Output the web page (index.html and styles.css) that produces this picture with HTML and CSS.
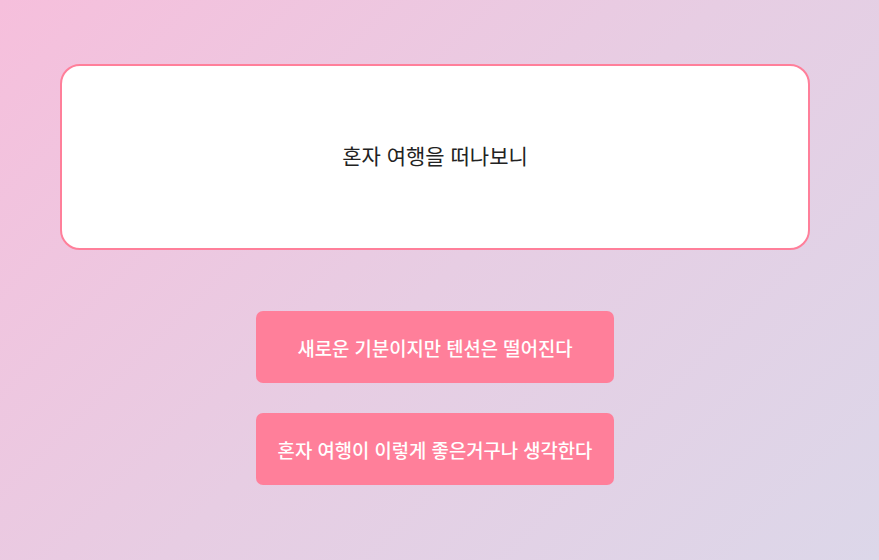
FILE: index.html
```html
<!DOCTYPE html>
<html lang="ko">
<head>
<meta charset="utf-8">
<link rel="stylesheet" href="styles.css">
</head>
<body>
<div class="wrap">
  <div class="card">
    <p class="question">혼자 여행을 떠나보니</p>
  </div>
  <div class="choices">
    <button class="choice">새로운 기분이지만 텐션은 떨어진다</button>
    <button class="choice">혼자 여행이 이렇게 좋은거구나 생각한다</button>
  </div>
</div>
</body>
</html>
```
FILE: styles.css
```css
html, body {
  margin: 0;
  height: 100%;
}
body {
  background: linear-gradient(135deg, #f6bfdc 0%, #e7cde3 50%, #dcd7e9 100%);
  font-family: "Noto Sans CJK KR", "Noto Sans", sans-serif;
}
.wrap {
  width: 870px;
  display: flex;
  flex-direction: column;
  align-items: center;
  padding-top: 64px;
}
.card {
  box-sizing: border-box;
  width: 750px;
  height: 186px;
  background: #fff;
  border: 2px solid #ff7f9a;
  border-radius: 20px;
  display: flex;
  align-items: center;
  justify-content: center;
}
.question {
  margin: 0 0 5px;
  font-size: 21px;
  color: #222;
}
.choices {
  margin-top: 61px;
  display: flex;
  flex-direction: column;
  gap: 30px;
}
.choice {
  width: 358px;
  height: 72px;
  border: none;
  border-radius: 7px;
  background: #ff7f9a;
  color: #fff;
  font-family: "Noto Sans CJK KR", "Noto Sans", sans-serif;
  font-size: 18.8px;
  font-weight: 500;
  padding: 0;
}
```
